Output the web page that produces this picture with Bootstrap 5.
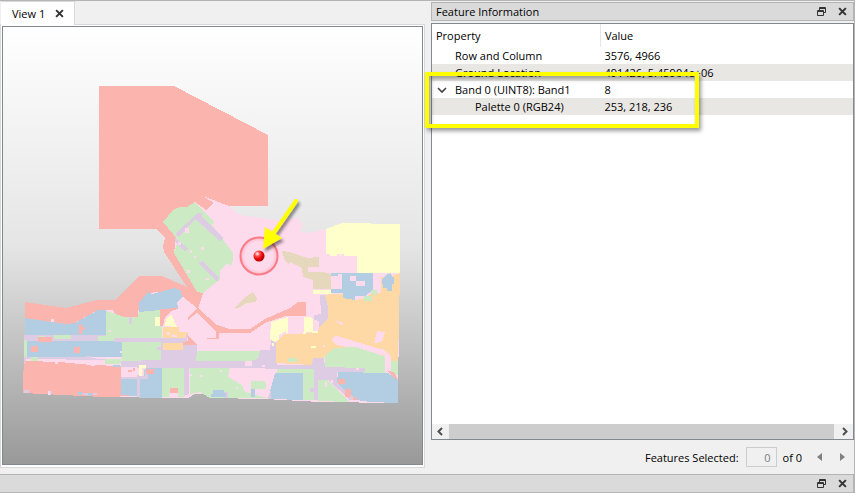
<!DOCTYPE html>
<html lang="en">
<head>
<meta charset="utf-8">
<meta name="viewport" content="width=device-width, initial-scale=1">
<title>Feature Information</title>
<link href="https://cdn.jsdelivr.net/npm/bootstrap@5.3.0/dist/css/bootstrap.min.css" rel="stylesheet">
<style>
body{background:#f0f0f0;color:#000;font:11px/17px "Open Sans","Noto Sans",sans-serif;border-top:1px solid #b4b4b4;border-right:1px solid #b4b4b4}
button{border:0;background:none;padding:0;color:#333;line-height:1}
svg{display:block}
.workspace{display:grid;grid-template-columns:minmax(0,425fr) minmax(0,423fr);gap:6px}
.view-tabs{height:23px;padding-left:1px}
.view-tab{background:#fff;border:1px solid #d9d9d9;border-width:1px 1px 0 0;padding:0 10px 0 11px;gap:10px;height:24px;position:relative;z-index:1}
.view-frame{background:#fff;border:1px solid #d9d9d9;padding:1px 1px 2px;margin-bottom:6px}
.map-canvas{border:1px solid #828790;background:linear-gradient(#fff,#e5e5e5 50%,#999)}
.map-canvas svg{width:100%;height:100%}
.dock-title{background:#dadada;border:1px solid #b4b4b4;height:19px;padding:0 6px 0 4px}
.info-panel{padding-top:1px}
.dock-tools{gap:12px}
.tree-box{border:1px solid #828790;margin-top:2px;background:#fff;position:relative}
.tree-table{width:100%;table-layout:fixed;border-collapse:collapse}
.tree-table th,.tree-table td{padding:0 4px;font-weight:400;white-space:nowrap;overflow:hidden}
.tree-table th{height:23px}
.tree-table th+th{border-left:1px solid #e5e5e5}
.tree-table td{height:17px}
.prop-col{width:40%}
.shade-row td{background:#e9e7e3}
.tree-table td.level-1{padding-left:23px}
.tree-table td.level-2{padding-left:43px}
.tree-table td.has-toggle{padding-left:5px}
.toggle-btn{width:10px;margin-right:8px}
.callout-box{position:absolute;left:-7px;top:48px;width:274px;height:56px;border:4px solid #ff0;box-shadow:2px 3px 4px #0006,inset 2px 3px 4px #0005;pointer-events:none}
.h-scroll{height:15px;background:#f0f0f0;padding:0 4px}
.h-thumb{background:#cdcdcd;margin:0 7px 0 5px}
.nav-bar-row{height:34px;padding:0 9px}
.count-input{width:31px;height:20px;border:1px solid #ccc;background:#f0f0f0;color:#808080;text-align:right;padding:0 5px;margin:0 6px 0 7px}
.step-btns{gap:18px;margin-left:15px}
.bottom-dock{border-left:0}
</style>
<script src="https://cdn.jsdelivr.net/npm/bootstrap@5.3.0/dist/js/bootstrap.bundle.min.js"></script>
</head>
<body class="d-flex flex-column min-vh-100">
<svg width="0" height="0" class="position-absolute" aria-hidden="true">
<symbol id="close" viewBox="0 0 8 8"><path d="M1 1l6 6M7 1L1 7" stroke="currentColor" stroke-width="1.8" fill="none"/></symbol>
<symbol id="float" viewBox="0 0 9 9"><path d="M2.5 3V.5h6v5H6.5M2.500 1.500h6M.5 3.500h6v5h-6zM.5 4.500h6" stroke="currentColor" fill="none"/></symbol>
</svg>
<main class="workspace flex-grow-1">
<section class="d-flex flex-column">
<div class="view-tabs d-flex">
<div class="view-tab d-flex align-items-center"><span>View 1</span><button type="button" aria-label="Close view"><svg width="9" height="9"><use href="#close"/></svg></button></div>
</div>
<div class="view-frame d-flex flex-grow-1">
<div class="map-canvas flex-grow-1">
<svg viewBox="3 27 419 437" role="img" aria-label="Classified map">
<defs>
<radialGradient id="ball" cx=".35" cy=".3" r=".75"><stop offset="0" stop-color="#fff"/><stop offset=".3" stop-color="#ff5050"/><stop offset=".65" stop-color="#e60000"/><stop offset="1" stop-color="#a00"/></radialGradient>
<radialGradient id="halo"><stop offset=".75" stop-color="#ffb0bc" stop-opacity="0"/><stop offset="1" stop-color="#ff9dac" stop-opacity=".6"/></radialGradient>
<filter id="drop" x="-50%" y="-50%" width="200%" height="200%"><feDropShadow dx="2" dy="3" stdDeviation="1.500" flood-opacity=".45"/></filter>
</defs>
<g shape-rendering="crispEdges">
<path fill="#fddaec" d="M25 302L66 308 97 300H115L139 276H162L187 287 164 252V222L203 196 229 206 240 215 260 218 283 221 297 217 303 225 300 232 308 233 326 229 342 223 400 224 398 403 320 402 265 399 210 398 203 394H195L188 398 103 397 23 393 25 335Z"/>
<path fill="#fbb4ae" d="M99 86H174L268 135V206H229L203 196 214 203 206 210 195 202 163 222 176 237 174 253 203 293 201 300 198 308 217 325 230 329H250L265 319 290 308 298 302H306V316H285L265 323 250 333H219V339H207V338H216V331L197 313 188 320V318L197 308 183 297 180 290 147 293 139 303 138 317H125L115 314 113 310H98L80 320 75 323 67 324 52 322 25 318V302L66 308 97 300H115L139 276H162L187 287 164 252 163 246 165 238 157 229H99Z"/>
<path fill="#ccebc5" d="M163 222L173 210 180 207 187 207 195 202 214 222 212 225 233 253V258L232 265 226 264 220 270V280L213 285 203 293 197 292 174 253 178 240Z"/>
<path fill="#decbe4" d="M198 213H202V217L223 238 220 241 195 219 179 237 175 234ZM175 238L188 248 185 251 175 242ZM198 263L202 261 219 278 217 282Z"/>
<path fill="#fddaec" d="M185 228h4v5h-4zM178 242h3v3h-3zM201 247h3v3h-3zM190 250h2v3h-2zM194 256h2v2h-2zM187 270h3v3h-3zM206 278h3v2h-3z"/>
<path fill="#b3cde3" d="M25 318L52 322 67 324 75 323 98 310H106V337H25ZM139 303L148 292 152 294 175 288 180 290 183 297 177 302 178 308 160 310 139 312ZM26 340H122V357H26ZM139 376H144V370L148 366H162V398H139ZM121 379H138V396H121Z"/>
<path fill="#ccebc5" d="M106 311L115 314 125 317H138L139 312 160 310 162 319V338H106ZM122 342H161V361H122ZM24 340h3v17h-3zM162 366H184V397H162ZM190 366H230L228 377 242 385 245 392 268 398H210L200 392 190 394Z"/>
<path fill="#decbe4" d="M24 335H106V338H186V332H188L187 345H197V361H277V368H121V364L105 360 26 359V373H24V357H86V356H91V358L121 361 160 360V342H114V341H26V340H24ZM184 366H189V394L184 396ZM137 375H140V397H137ZM121 376H145V371H148V379H121ZM129 317h3v7h-3zM260 350H270L271 341H276L277 368H250V361ZM268 380H272V399H268Z"/>
<path fill="#ccebc5" d="M38 336h7v2h-7zM54 335h17v4h-17zM98 336h16v5h-16zM31 357h7v4h-7zM105 359h16v5h-16zM197 351H260L258 359 250 361H196ZM251 381H267V389H255L251 390ZM150 342h11v18h-11z"/>
<path fill="#fbb4ae" d="M25 361L60 362 91 365 121 366V395L137 396 103 397 23 393V375ZM38 337h14v5h-14zM31 346h7v6h-7zM74 347h6v6h-6zM79 324h3v3h3v3h-3v4h-3zM146 369h8v5h-8zM170 388h8v5h-8zM150 369h4v4h-4zM160 309L179 308 170 312 165 317 163 326H160ZM188 336L197 345H183V342L188 341Z"/>
<path fill="#fddaec" d="M51 319h3v3h-3zM55 361h3v3h-3zM91 361h4v5h-4zM121 367h16v10h-16zM48 391h3v4h-3zM169 393h9v5h-9zM200 375h3v2h-3zM220 370h2v2h-2zM236 387h2v2h-2zM245 361h7v5h-7zM262 365h3v2h-3zM120 351h2v2h-2zM109 330h2v2h-2zM190 374h2v2h-2z"/>
<path fill="#fbb4ae" d="M128 370h4v2h-4zM133 368h2v3h-2z"/>
<path fill="#decbe4" d="M24 390h5v3h-5zM50 391h2v3h-2zM83 393h5v2h-5zM93 393h4v2h-4zM157 347h5v3h-5zM224 392h4v6h-4z"/>
<path fill="#b3cde3" d="M78 392h4v3h-4zM88 393h4v3h-4zM113 365h7v2h-7zM213 390h11v3h2v4h-15v-3h2zM251 389h4v8h-4zM270 382L275 373 303 372V400L271 399Z"/>
<path fill="#ffffcc" d="M155 317h5v9h-5zM165 326L166 319 171 314 177 327ZM139 365h7v3h-4v8h-3zM326 229L342 223 400 224V273H357V256H326ZM313 290h19v4h-19zM271 322L288 317V333L275 342 270 339ZM304 317H310L313 320V331H318V334L310 332H304Z"/>
<path fill="#fddaec" d="M279 335l7-4v4l-7 4z"/>
<path fill="#fed9a6" d="M163 327H179V332H188L185 338H163ZM163 343H183V350H163ZM324 295L332 294H343L355 300 365 298 373 292 380 290V277H390L400 273 398 361H392L375 350 325 355 324 359H313L312 365 276 363V342L285 334 318 333 319 327 328 318V307Z"/>
<path fill="#fddaec" d="M167 332h3v3h-3zM172 335h5v2h-5z"/>
<path fill="#e5d8bd" d="M282 251L290 252 307 258 319 257V267H308V272H323L331 274V289H313V280L303 277 302 268 290 262 288 264 285 260ZM235 307L247 296 253 292 257 298 256 302 247 303 240 307 235 309Z"/>
<path fill="#fddaec" d="M325 254h5v3h-5zM337 254h3v3h-3zM341 254h3v3h-3zM373 273h8v20h-8z"/>
<path fill="#b3cde3" d="M331 273H373V290L365 296H355V300L343 298V293H331V289H342V276H331ZM382 280L386 275 391 273 392 277H394V284H392V291H387V288H383Z"/>
<path fill="#fddaec" d="M350 276h6v5h-6zM356 281h9v5h-9zM342 274h-4v3h4zM336 320L343 323V325L339 324ZM377 331L385 332 382 342 374 343ZM333 337L337 336 377 348 385 350 391 357V371H385V355L375 353 337 345 332 341Z"/>
<path fill="#ccebc5" d="M372 290h5v5h-5zM364 296h8v5h-8zM325 355L335 348 355 347 375 353 385 357V373H325ZM391 361H398V375H391ZM277 369H314V373H277ZM303 372H314V400H303ZM318 380H327L350 402 318 401ZM288 358h9v4h-9z"/>
<path fill="#decbe4" d="M320 295H325L328 307V318L319 327V321L314 320V315L321 314ZM265 351L271 350V340L276 343V365H312L313 358H324L325 367 365 368V372H337V383L345 390 357 400H350L328 380H318V400H314V392H310V388H314V369H265Z"/>
<path fill="#b3cde3" d="M338 372L388 373 398 380V403L370 402 357 400 345 390 337 383Z"/>
<path fill="#fbb4ae" d="M338 379h7v5h-7zM345 389h6v8h-6zM353 397h4v3h-4zM388 371L394 372 398 380 393 377Z"/>
<path fill="#fddaec" d="M356 368h3v2h-3zM325 382h2v5h-2zM331 380h2v3h-2zM381 349h3v5h-3zM323 345h2v2h-2zM265 380L270 370H276L268 398Z"/>
<path fill="#ffffcc" d="M311 346h5v2h-5zM272 343h2v3h-2zM303 332h3v2h-3z"/>
</g>
<circle cx="259" cy="256" r="18.500" fill="url(#halo)" stroke="#f97c86" stroke-width="2"/>
<circle cx="259" cy="256" r="5.500" fill="url(#ball)"/>
<g filter="url(#drop)"><path d="M273 234L296 201" stroke="#ff0" stroke-width="4" stroke-linecap="round"/><path d="M263 249L265 227 282 238Z" fill="#ff0"/></g>
</svg>
</div>
</div>
</section>
<section class="info-panel d-flex flex-column">
<header class="dock-title d-flex align-items-center justify-content-between"><span>Feature Information</span>
<span class="dock-tools d-flex"><button type="button" aria-label="Float"><svg width="9" height="9"><use href="#float"/></svg></button><button type="button" aria-label="Close"><svg width="9" height="9"><use href="#close"/></svg></button></span></header>
<div class="tree-box d-flex flex-column flex-grow-1">
<table class="tree-table">
<colgroup><col class="prop-col"><col></colgroup>
<thead><tr><th scope="col">Property</th><th scope="col">Value</th></tr></thead>
<tbody>
<tr><td class="level-1">Row and Column</td><td>3576, 4966</td></tr>
<tr class="shade-row"><td class="level-1">Ground Location</td><td>491426, 5.45904e+06</td></tr>
<tr><td class="has-toggle"><button type="button" class="toggle-btn" aria-label="Collapse Band 0"><svg width="10" height="8" viewBox="0 0 10 8"><path d="M1 2l4 4 4-4" fill="none" stroke="#444" stroke-width="1.600"/></svg></button>Band 0 (UINT8): Band1</td><td>8</td></tr>
<tr class="shade-row"><td class="level-2">Palette 0 (RGB24)</td><td>253, 218, 236</td></tr>
</tbody>
</table>
<div class="h-scroll d-flex mt-auto align-items-center">
<button type="button" aria-label="Scroll left"><svg width="8" height="9" viewBox="0 0 8 9"><path d="M6 1L2.500 4.500 6 8" fill="none" stroke="#505050" stroke-width="2"/></svg></button>
<div class="h-thumb flex-grow-1 h-100"></div>
<button type="button" aria-label="Scroll right"><svg width="8" height="9" viewBox="0 0 8 9"><path d="M2 1l3.500 3.500L2 8" fill="none" stroke="#505050" stroke-width="2"/></svg></button>
</div>
<div class="callout-box"></div>
</div>
<div class="nav-bar-row d-flex align-items-center justify-content-end">
<label for="selected">Features Selected:</label><input id="selected" class="count-input" type="text" value="0" disabled><span>of 0</span>
<span class="step-btns d-flex"><button type="button" aria-label="Previous"><svg width="5" height="8"><path d="M5 0v8L0 4z" fill="#808080"/></svg></button><button type="button" aria-label="Next"><svg width="5" height="8"><path d="M0 0v8l5-4z" fill="#808080"/></svg></button></span>
</div>
</section>
</main>
<footer class="dock-title bottom-dock d-flex align-items-center justify-content-end">
<span class="dock-tools d-flex"><button type="button" aria-label="Float"><svg width="9" height="9"><use href="#float"/></svg></button><button type="button" aria-label="Close"><svg width="9" height="9"><use href="#close"/></svg></button></span>
</footer>
</body>
</html>
